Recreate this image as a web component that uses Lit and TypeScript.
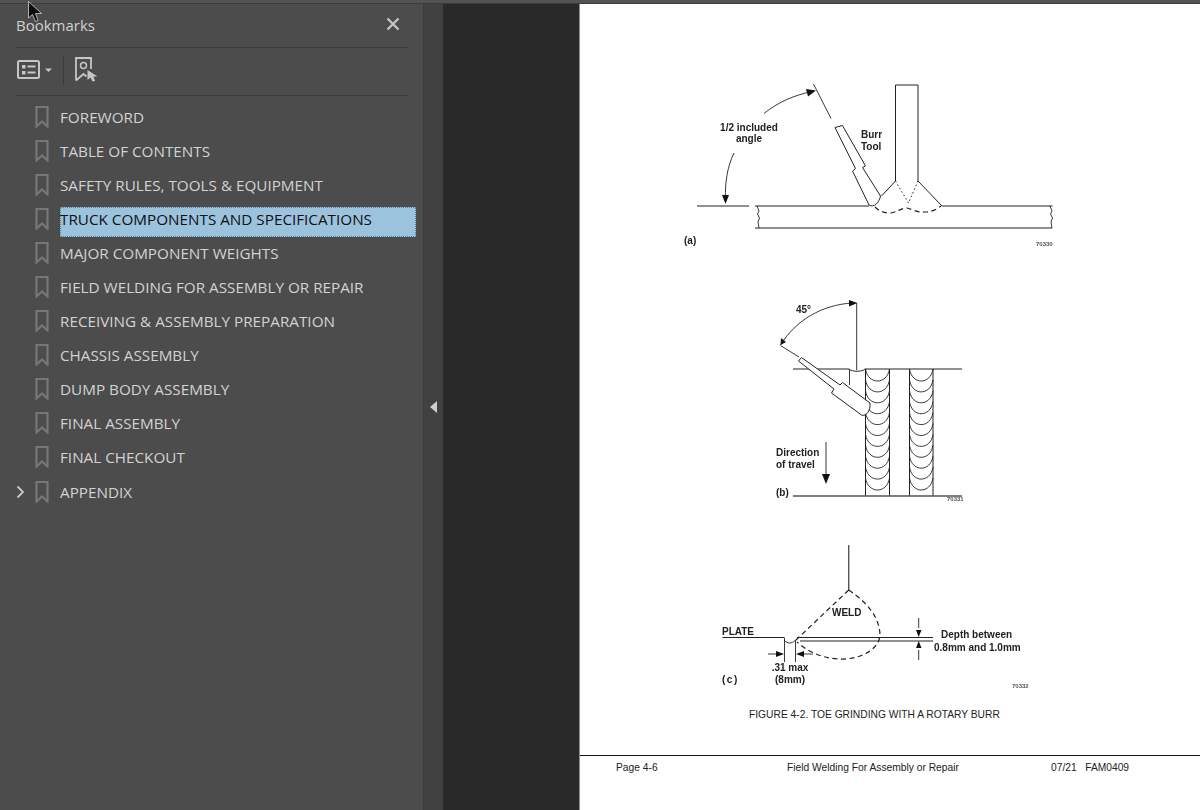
import { LitElement, html, svg, css } from "lit";
import { customElement } from "lit/decorators.js";

const BOOKMARKS = [
  "FOREWORD",
  "TABLE OF CONTENTS",
  "SAFETY RULES, TOOLS & EQUIPMENT",
  "TRUCK COMPONENTS AND SPECIFICATIONS",
  "MAJOR COMPONENT WEIGHTS",
  "FIELD WELDING FOR ASSEMBLY OR REPAIR",
  "RECEIVING & ASSEMBLY PREPARATION",
  "CHASSIS ASSEMBLY",
  "DUMP BODY ASSEMBLY",
  "FINAL ASSEMBLY",
  "FINAL CHECKOUT",
  "APPENDIX",
];
const SELECTED = 3;

// the weld beads in figure (b), one arc per pass
const scallops = (x: number, w: number) =>
  Array.from({ length: 11 }, (_, i) => {
    const y = 369 + i * 10.9;
    return svg`<path class="thin" d="M${x} ${y} C${x + 2.5} ${y + 16} ${x + w - 2.5} ${y + 16} ${x + w} ${y}" />`;
  });

const figureA = svg`
  <path class="line" d="M895.5 181V85H918V181" />
  <path class="line" d="M895.5 181L881.5 196M918 181L942 206H1052.5M697 206H749M755 206H869" />
  <path class="line" d="M755 228H1052" />
  <path class="thin" d="M757 206l2 5-1.500 3 2 4-1.500 4 1 6M1050 206l2 5-1.500 3 2 4-1.500 4 1 6" />
  <path class="line" d="M835 127.500L842.500 125.500 865.500 166 862.500 167.500 880.500 196C879 203 874 208 869 205L852.500 171 855.500 168.500Z" />
  <path class="thin" d="M813.500 84L831 118.500" />
  <path class="thin" d="M764 113.500C778 102 795 95 812 91.500" />
  <path class="fill" d="M816 90.500L806 89 808 96.500Z" />
  <path class="thin" d="M734 153C727 167 725 184 725.500 198" />
  <path class="fill" d="M725.500 204L722 195H729Z" />
  <path class="dots" d="M895.500 181L908.500 203 918 181" />
  <path class="dash" d="M875 207C880 212 885 213 891 213 897 212 901 208 907 208 912 209 917 213 925 212 932 212 937 209 941 206" />
  <text class="label" x="749" y="130.500" text-anchor="middle">1/2 included</text>
  <text class="label" x="749" y="142" text-anchor="middle">angle</text>
  <text class="label" x="861" y="138">Burr</text>
  <text class="label" x="861" y="149.500">Tool</text>
  <text class="label" x="684" y="243.500">(a)</text>
  <text class="code" x="1036" y="246">70330</text>
`;

const figureB = svg`
  <path class="line" d="M793 369H849C852 372 862 372 865 369H962" />
  <path class="thin" d="M856.700 303V370M849.500 369V385" />
  <path class="thin" d="M780.500 345C796 320 822 305 852 303" />
  <path class="fill" d="M857.500 303L849 300V306.500ZM780.500 345L781 338 786 342Z" />
  <path class="thin" d="M780.500 345.500L799 357" />
  <path class="line" d="M865.500 369V496M889.500 369V496M909.500 369V496M933 369V496" />
  ${scallops(865.5, 24)}
  ${scallops(909.5, 23.5)}
  <path class="line tool" d="M801.500 357.500L798.500 361 834 389 831.500 393 861.500 415C866 417 871 410 870 403L842.500 382.500 840 385Z" />
  <path class="heavy" d="M793 496H962" />
  <path class="thin" d="M826 442V475" />
  <path class="fill" d="M826 484L822 474H830Z" />
  <text class="label" x="776" y="456">Direction</text>
  <text class="label" x="776" y="468">of travel</text>
  <text class="label" x="776" y="496">(b)</text>
  <text class="label" x="796" y="313">45°</text>
  <text class="code" x="947" y="500.500">70331</text>
`;

const figureC = svg`
  <path class="heavy" d="M848.700 545V590" />
  <path class="dash" d="M848.700 590L796 640M848.700 590C868 603 880 618 880 636 878 650 860 660 838 659 820 658 806 650 797 642" />
  <path class="line" d="M722.500 637.500H784M797 637.500H933M800 641H933" />
  <path class="thin" d="M784.500 637.500V662M795.500 640V662M784 640C787 644 792 644 795.500 640" />
  <path class="thin" d="M768 654H778M804 654H813M918.700 618V628M918.700 650V660" />
  <path class="fill" d="M784 654L776 651V657ZM796 654L804 651V657ZM918.700 637L916 630H921.500ZM918.700 641L916 648H921.500Z" />
  <text class="label" x="832" y="616">WELD</text>
  <text class="label" x="722" y="635">PLATE</text>
  <text class="label" x="941" y="638">Depth between</text>
  <text class="label" x="934" y="651">0.8mm and 1.0mm</text>
  <text class="label" x="790" y="671" text-anchor="middle">.31 max</text>
  <text class="label" x="790" y="683" text-anchor="middle">(8mm)</text>
  <text class="label" x="722" y="683" letter-spacing="1.500">(c)</text>
  <text class="code" x="1012" y="688">70332</text>
`;

@customElement("app-root")
export class AppRoot extends LitElement {
  static styles = css`
    :host {
      display: block;
      width: 1200px;
      height: 810px;
      overflow: hidden;
      position: relative;
      font-family: "Open Sans", "Noto Sans", sans-serif;
      background: #4b4b4b;
    }
    .topline {
      height: 3px;
      background: #525252;
      border-bottom: 1px solid #3c3c3c;
    }
    .main {
      display: flex;
      height: 806px;
    }
    .panel {
      width: 423px;
      flex: none;
      background: #4c4c4c;
      padding: 0 14px 0 16px;
      box-sizing: border-box;
    }
    .head {
      height: 43px;
      display: flex;
      align-items: center;
      justify-content: space-between;
      box-sizing: content-box;
      padding-right: 9px;
      border-bottom: 1px solid #3a3a3a;
      color: #d0d0d0;
      font-size: 15px;
    }
    .head span {
      margin-top: -2px;
    }
    .head svg {
      margin-top: -4px;
    }
    .tools {
      height: 48px;
      display: flex;
      align-items: center;
      border-bottom: 1px solid #3a3a3a;
      padding: 0 0 4px 1px;
      box-sizing: border-box;
    }
    .sep {
      width: 1px;
      height: 30px;
      background: #3a3a3a;
      margin: 0 11px 0 11px;
    }
    .list {
      padding-top: 4px;
    }
    .row {
      height: 34.05px;
      display: flex;
      align-items: center;
      color: #d2d2d2;
      font-size: 15.25px;
      white-space: nowrap;
    }
    .twist {
      width: 19px;
      flex: none;
      display: flex;
    }
    .mark {
      width: 25px;
      flex: none;
      display: flex;
    }
    .name {
      flex: 1;
    }
    .row.sel .name {
      background: #9cc3de;
      color: #111;
      outline: 1px dotted #5d7f96;
      outline-offset: -1px;
      line-height: 30px;
      margin-right: -7px;
      position: relative;
      top: 3px;
    }
    .row.sel .name span {
      position: relative;
      top: -3px;
    }
    .splitter {
      width: 20px;
      flex: none;
      background: #414141;
      border-left: 1px solid #3b3b3b;
      box-sizing: border-box;
      display: flex;
      align-items: center;
      justify-content: center;
      padding-right: 2px;
    }
    .gutter {
      width: 136px;
      flex: none;
      background: #292929;
    }
    .page {
      flex: 1;
      background: #fff;
      border-left: 1px solid #8c8c8c;
      box-sizing: border-box;
    }
    .page svg {
      display: block;
    }
    .art {
      filter: blur(0.45px);
    }
    .line, .thin, .heavy, .dash, .dots {
      fill: none;
      stroke: #222;
    }
    .line { stroke-width: 1; }
    .line.tool { fill: #fff; }
    .thin { stroke-width: 0.9; }
    .heavy { stroke-width: 1.4; stroke: #555; }
    .dash { stroke-width: 1.2; stroke-dasharray: 5 3.5; }
    .dots { stroke-width: 1; stroke-dasharray: 1.500 2.500; }
    .fill { fill: #111; }
    text {
      font-family: "Liberation Sans", Arial, sans-serif;
      fill: #222;
    }
    .label { font-size: 10px; font-weight: 700; }
    .code { font-size: 6px; font-weight: 700; fill: #555; }
    .caption { font-size: 10.25px; }
    .foot { font-size: 10.25px; }
    .rule { stroke: #111; stroke-width: 1; }
    .cursor {
      position: absolute;
      left: 27px;
      top: 0;
    }
  `;

  renderBookmark() {
    return html`<svg width="14" height="22" viewBox="0 0 14 22">
      <path d="M1.500 1H12.500V20.500L7 15.500 1.500 20.500Z" fill="none" stroke="#777" stroke-width="2.200" />
    </svg>`;
  }

  renderRow(name: string, i: number) {
    const hasKids = name === "APPENDIX";
    return html`<div class="row ${i === SELECTED ? "sel" : ""}">
      <div class="twist">
        ${hasKids
          ? html`<svg width="10" height="14" viewBox="0 0 10 14">
              <path d="M1.500 1.500L7 7 1.500 12.500" fill="none" stroke="#c8c8c8" stroke-width="1.800" />
            </svg>`
          : ""}
      </div>
      <div class="mark">${this.renderBookmark()}</div>
      <div class="name"><span>${name}</span></div>
    </div>`;
  }

  render() {
    return html`
      <div class="topline"></div>
      <div class="main">
        <div class="panel">
          <div class="head">
            <span>Bookmarks</span>
            <svg width="14" height="14" viewBox="0 0 14 14">
              <path d="M1.500 1.500L12.500 12.500M12.500 1.500L1.500 12.500" stroke="#c9c9c9" stroke-width="2.200" />
            </svg>
          </div>
          <div class="tools">
            <svg width="35" height="19" viewBox="0 0 35 19">
              <rect x="1" y="1" width="21" height="17" rx="1.500" fill="none" stroke="#c6c6c6" stroke-width="2" />
              <path d="M5 5h3.500v3.500H5zM5 11h3.500v3.500H5z" fill="#c6c6c6" />
              <path d="M10.500 6.500h8M10.500 12.500h8" stroke="#c6c6c6" stroke-width="1.800" />
              <path d="M28 8.500H35L31.500 12Z" fill="#c6c6c6" />
            </svg>
            <div class="sep"></div>
            <svg width="23" height="25" viewBox="0 0 23 25">
              <path d="M1 23.500V1H16V12M1 23.500L8.500 17 11.500 19.500" fill="none" stroke="#c6c6c6" stroke-width="1.800" />
              <circle cx="8.500" cy="8.500" r="3" fill="none" stroke="#c6c6c6" stroke-width="1.500" />
              <path d="M12.500 13L22.500 19.500H18.500L20 24 17.500 24.500 15.500 20.500 12.500 23Z" fill="#c6c6c6" />
            </svg>
          </div>
          <div class="list">${BOOKMARKS.map((b, i) => this.renderRow(b, i))}</div>
        </div>
        <div class="splitter">
          <svg width="8" height="12" viewBox="0 0 8 12"><path d="M8 0V12L1 6Z" fill="#cfcfcf" /></svg>
        </div>
        <div class="gutter"></div>
        <div class="page">
          <svg width="620" height="806" viewBox="580 4 620 806">
            <g class="art">${figureA} ${figureB} ${figureC}</g>
            <text class="caption" x="749" y="717.500">FIGURE 4-2. TOE GRINDING WITH A ROTARY BURR</text>
            <path class="rule" d="M580 755.500H1200" />
            <text class="foot" x="616" y="771">Page 4-6</text>
            <text class="foot" x="787" y="771">Field Welding For Assembly or Repair</text>
            <text class="foot" x="1051" y="771" xml:space="preserve">07/21   FAM0409</text>
          </svg>
        </div>
      </div>
      <svg class="cursor" width="16" height="23" viewBox="0 0 16 23">
        <path d="M1.500 1.500V18L5.500 14.500 8.500 21.500 11 20.500 8.500 13.500H14.500Z" fill="#0c0c0c" stroke="#e8e8e8" stroke-width="0.700" />
      </svg>
    `;
  }
}
